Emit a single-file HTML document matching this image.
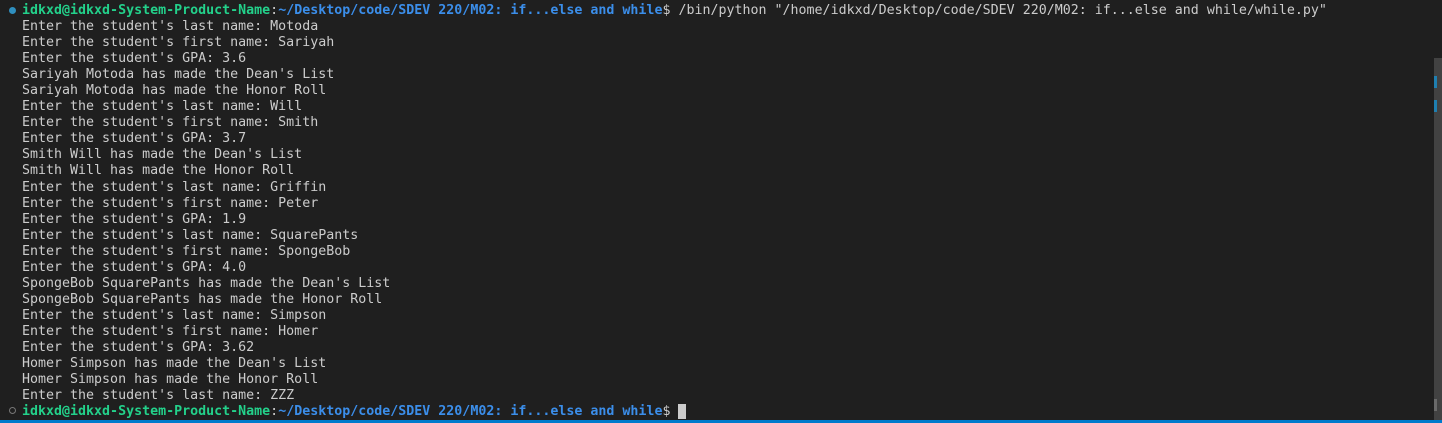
<!DOCTYPE html>
<html><head><style>
html,body{margin:0;padding:0;width:1442px;height:423px;overflow:hidden;background:#1f1f1f;}
.t{position:absolute;left:22px;top:3px;font-family:"DejaVu Sans Mono","Liberation Mono",monospace;font-size:13.3px;line-height:16.05px;color:#cccccc;white-space:pre;}
.g{color:#23d18b;font-weight:bold}.b{color:#3b8eea;font-weight:bold}
.dot{position:absolute;left:9px;width:7px;height:7px;border-radius:50%;}
</style></head><body>
<div class="dot" style="top:7px;background:#2f8fbf"></div>
<div class="dot" style="top:407px;border:1px solid #777;width:5px;height:5px"></div>
<div class="t"><span class="g">idkxd@idkxd-System-Product-Name</span>:<span class="b">~/Desktop/code/SDEV 220/M02: if...else and while</span>$ /bin/python "/home/idkxd/Desktop/code/SDEV 220/M02: if...else and while/while.py"
Enter the student's last name: Motoda
Enter the student's first name: Sariyah
Enter the student's GPA: 3.6
Sariyah Motoda has made the Dean's List
Sariyah Motoda has made the Honor Roll
Enter the student's last name: Will
Enter the student's first name: Smith
Enter the student's GPA: 3.7
Smith Will has made the Dean's List
Smith Will has made the Honor Roll
Enter the student's last name: Griffin
Enter the student's first name: Peter
Enter the student's GPA: 1.9
Enter the student's last name: SquarePants
Enter the student's first name: SpongeBob
Enter the student's GPA: 4.0
SpongeBob SquarePants has made the Dean's List
SpongeBob SquarePants has made the Honor Roll
Enter the student's last name: Simpson
Enter the student's first name: Homer
Enter the student's GPA: 3.62
Homer Simpson has made the Dean's List
Homer Simpson has made the Honor Roll
Enter the student's last name: ZZZ
<span class="g">idkxd@idkxd-System-Product-Name</span>:<span class="b">~/Desktop/code/SDEV 220/M02: if...else and while</span>$ <span style="background:#ccc">&nbsp;</span></div>
<div style="position:absolute;left:1434px;top:58px;width:8px;height:362px;background:#424242"></div>
<div style="position:absolute;left:1434px;top:76px;width:3px;height:12px;background:#1f7fb0"></div>
<div style="position:absolute;left:1434px;top:100px;width:3px;height:12px;background:#1f7fb0"></div>
<div style="position:absolute;left:1434px;top:399px;width:3px;height:12px;background:#6a6a6a"></div>
<div style="position:absolute;left:0;top:420px;width:1442px;height:3px;background:#007acc"></div>
</body></html>
